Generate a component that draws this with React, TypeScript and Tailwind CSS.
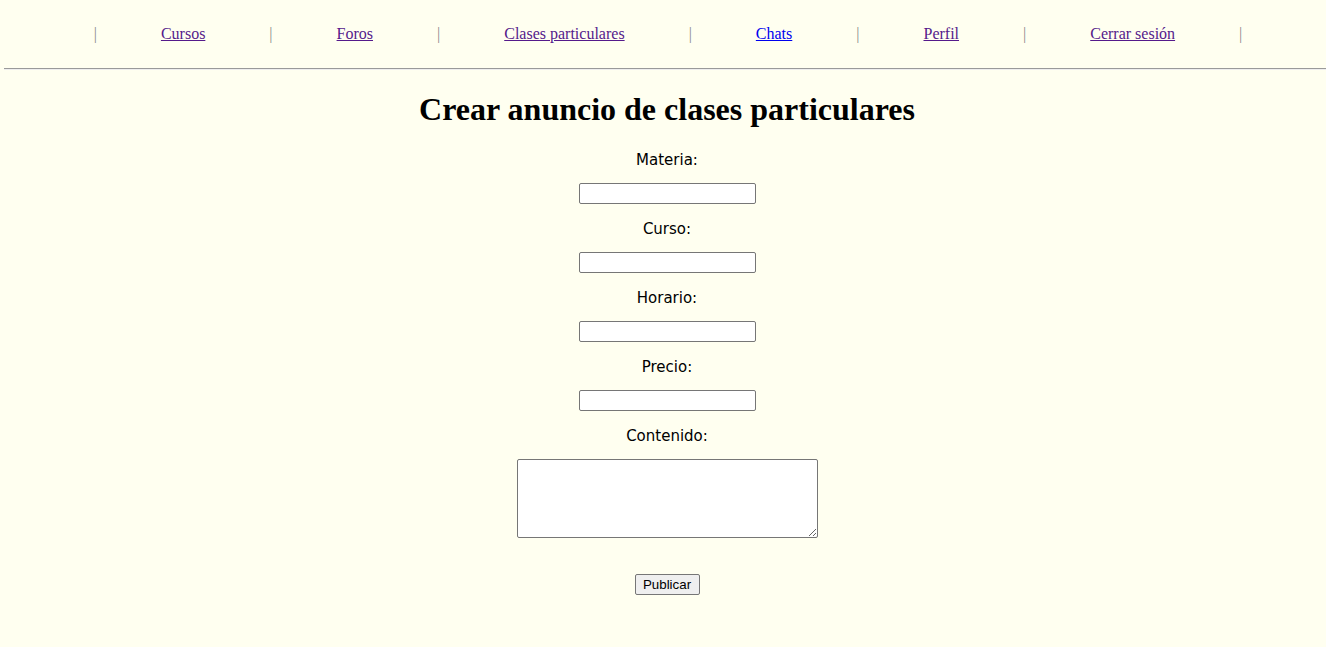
import React from "react";

const links = [
  { t: "Cursos", c: "text-[#551a8b]" },
  { t: "Foros", c: "text-[#551a8b]" },
  { t: "Clases particulares", c: "text-[#551a8b]" },
  { t: "Chats", c: "text-[#0000ee]" },
  { t: "Perfil", c: "text-[#551a8b]" },
  { t: "Cerrar sesión", c: "text-[#551a8b]" },
];

const fields = ["Materia:", "Curso:", "Horario:", "Precio:"];

export default function App() {
  return (
    <div className="min-h-[647px] w-full bg-[#fffff0] text-black">
      <nav className="flex justify-center pl-[10px] pt-[25px] font-['Liberation_Serif',serif] text-[16px] leading-[18px]">
        <span className="text-[#8a8a8a]">|</span>
        {links.map((l) => (
          <React.Fragment key={l.t}>
            <a href="#" className={`mx-[64px] underline ${l.c}`}>
              {l.t}
            </a>
            <span className="text-[#8a8a8a]">|</span>
          </React.Fragment>
        ))}
      </nav>
      <div className="ml-[4px] mt-[25px] h-[2px] border-t border-t-[#9a9a9a] border-b border-b-[#eeeeee]" />
      <main className="flex flex-col items-center pl-[8px]">
        <h1 className="mt-[21px] font-['Liberation_Serif',serif] text-[32px] font-bold leading-[36px]">
          Crear anuncio de clases particulares
        </h1>
        <form className="mt-[24px] flex flex-col items-center font-['DejaVu_Sans',sans-serif] text-[15px]">
          {fields.map((f, i) => (
            <React.Fragment key={f}>
              <label className={`block h-[18px] leading-[18px] ${i === 0 ? "" : "mt-[16px]"}`}>{f}</label>
              <input
                type="text"
                className="mt-[14px] h-[21px] w-[177px] rounded-[2px] border border-[#767676] bg-white"
              />
            </React.Fragment>
          ))}
          <label className="mt-[16px] block h-[18px] leading-[18px]">Contenido:</label>
          <textarea className="mt-[14px] h-[79px] w-[301px] rounded-[2px] border border-[#767676] bg-white" />
          <button
            type="button"
            className="mt-[36px] h-[21px] w-[65px] rounded-[2px] border border-[#767676] bg-[#efefef] font-['Liberation_Sans',Arial,sans-serif] text-[13.33px] leading-[19px] text-black"
          >
            Publicar
          </button>
        </form>
      </main>
    </div>
  );
}
